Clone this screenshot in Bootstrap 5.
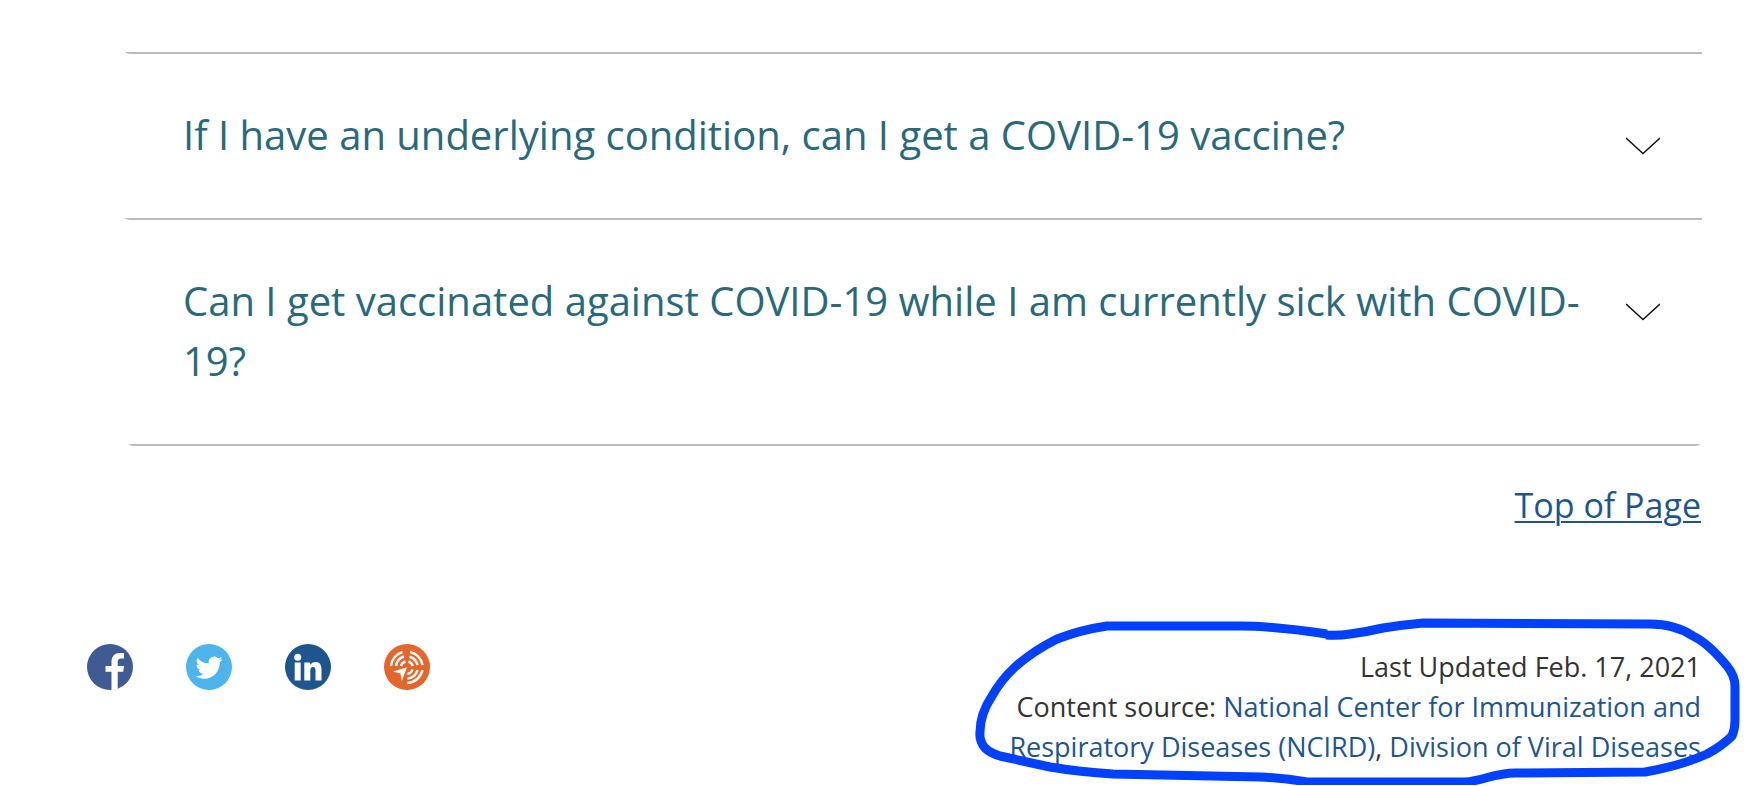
<!DOCTYPE html>
<html lang="en">
<head>
<meta charset="utf-8">
<meta name="viewport" content="width=device-width, initial-scale=1">
<title>COVID-19 vaccine questions</title>
<link href="https://cdn.jsdelivr.net/npm/bootstrap@5.3.0/dist/css/bootstrap.min.css" rel="stylesheet">
<style>
  body { font-family: "Open Sans", sans-serif; color: #333; background: #fff; }
  a { color: #1f558f; }
  .page-wrap { padding: 0 48px 0 87px; overflow: hidden; }
  .faq { margin-left: 38px; padding-top: 44px; }
  .faq .accordion-item, .faq-lead {
    border: 0 solid #bcbcbc; border-bottom-width: 2px;
    border-radius: 0 0 0 8px / 0 0 0 2px; background: transparent;
  }
  .faq-lead { height: 10px; }
  .faq .accordion-item:last-child {
    border-bottom: 2px solid #bcbcbc; margin: 0 2px 0 4px;
    border-radius: 0 0 6px 6px / 0 0 2px 2px;
  }
  .faq .accordion-button {
    padding: 51px 42px 53px 58px; gap: 32px; align-items: flex-start;
    font-size: 40px; line-height: 60px; color: #29697b;
    background: transparent; box-shadow: none;
  }
  .faq .accordion-item:last-child .accordion-button { padding-left: 54px; padding-right: 40px; }
  .faq .accordion-button::after { display: none; }
  .chevron { width: 34px; height: 18px; margin-top: 32px; }
  .top-link { font-size: 34px; line-height: 48px; margin-top: 35px; padding-right: 1px; }
  .top-link a { text-decoration-thickness: 2px; text-underline-offset: 3px; }
  .page-foot { margin-top: 115px; padding-bottom: 18px; }
  .social { gap: 53px; }
  .social svg { width: 46px; height: 46px; display: block; }
  .source { width: 720px; padding: 3px 1px 0 0; font-size: 27px; line-height: 40px; }
  .source a { text-decoration: none; }
  .ink { top: -35px; right: -48px; width: 780px; height: 176px; overflow: visible; pointer-events: none; }
</style>
</head>
<body>
<div class="page-wrap">
  <main>
    <div class="accordion accordion-flush faq">
      <div class="faq-lead"></div>
      <div class="accordion-item">
        <h2 class="accordion-header">
          <button class="accordion-button collapsed" type="button" aria-expanded="false">
            <span class="flex-grow-1">If I have an underlying condition, can I get a COVID-19 vaccine?</span>
            <svg class="chevron flex-shrink-0" viewBox="0 0 34 18" fill="none" stroke="#111" stroke-width="1.5" aria-hidden="true"><path d="M0 1 17 16.500 34 1"/></svg>
          </button>
        </h2>
      </div>
      <div class="accordion-item">
        <h2 class="accordion-header">
          <button class="accordion-button collapsed" type="button" aria-expanded="false">
            <span class="flex-grow-1">Can I get vaccinated against COVID-19 while I am currently sick with COVID-<wbr>19?</span>
            <svg class="chevron flex-shrink-0" viewBox="0 0 34 18" fill="none" stroke="#111" stroke-width="1.5" aria-hidden="true"><path d="M0 1 17 16.500 34 1"/></svg>
          </button>
        </h2>
      </div>
    </div>
    <div class="top-link text-end"><a href="#">Top of Page</a></div>
  </main>

  <footer class="page-foot d-flex justify-content-between align-items-start">
    <nav class="social d-flex" aria-label="Share">
      <a href="#" aria-label="Facebook">
        <svg viewBox="0 0 46 46"><circle cx="23" cy="23" r="23" fill="#405a93"/><path fill="#fff" d="M24.500 46V27.700H18.500V22H24.500V18C24.500 12 28 9 32.500 9H37V14.500H34C31.500 14.500 30.700 15.800 30.700 18V22H37L36.200 27.700H30.700V44.700Q27.500 46 24.500 46Z"/></svg>
      </a>
      <a href="#" aria-label="Twitter">
        <svg viewBox="0 0 46 46"><circle cx="23" cy="23" r="23" fill="#4eb4ec"/><path fill="#fff" transform="translate(9.500 9.300) scale(1.69)" d="M5.026 15c6.038 0 9.341-5.003 9.341-9.334q.002-.211-.006-.422A6.700 6.700 0 0 0 16 3.542a6.700 6.700 0 0 1-1.889.518 3.300 3.300 0 0 0 1.447-1.817 6.500 6.500 0 0 1-2.087.793A3.286 3.286 0 0 0 7.875 6.030a9.320 9.320 0 0 1-6.767-3.429 3.290 3.290 0 0 0 1.018 4.382A3.300 3.300 0 0 1 .640 6.575v.045a3.290 3.290 0 0 0 2.632 3.218 3.200 3.200 0 0 1-.865.115 3 3 0 0 1-.614-.057 3.280 3.280 0 0 0 3.067 2.277A6.600 6.600 0 0 1 .780 13.580a6 6 0 0 1-.780-.045A9.340 9.340 0 0 0 5.026 15"/></svg>
      </a>
      <a href="#" aria-label="LinkedIn">
        <svg viewBox="0 0 46 46"><circle cx="23" cy="23" r="23" fill="#1f558f"/><g fill="#fff"><circle cx="12.700" cy="13.300" r="3.500"/><path d="M9.700 18.500H15.700V36.500H9.700ZM19.300 18.500H25V21C26.200 19 28.300 18 30.700 18C35 18 36.500 21 36.500 26V36.500H30.500V27C30.500 24.500 30 23 28 23C26 23 25.300 24.500 25.300 27V36.500H19.300Z"/></g></svg>
      </a>
      <a href="#" aria-label="Syndicate">
        <svg viewBox="0 0 46 46"><circle cx="23" cy="23" r="23" fill="#e4662c"/><g fill="none" stroke="#fff" stroke-width="2.500"><path d="M7 22A16.500 16.500 0 0 1 18.500 8M12 22A11.500 11.500 0 0 1 20 12.500M17 22A6.500 6.500 0 0 1 21.500 17.500M26 8A16.500 16.500 0 0 1 38.500 21M25.500 12.800A11.500 11.500 0 0 1 33.500 21M24.500 17.500A6.500 6.500 0 0 1 28.700 22M38.500 26A16.500 16.500 0 0 1 23.500 39M33.500 26A11.500 11.500 0 0 1 23.500 34.500M28.500 25.500A6.500 6.500 0 0 1 23.500 30"/></g><path fill="#fff" d="M23 23.200 17.700 37.200 16.500 29.500 9 27.500Z"/></svg>
      </a>
    </nav>
    <div class="source text-end position-relative">
      <div>Last Updated Feb. 17, 2021</div>
      <div>Content source: <a href="#">National Center for Immunization and Respiratory Diseases (NCIRD)</a>, <a href="#">Division of Viral Diseases</a></div>
      <svg class="ink position-absolute" viewBox="970 610 780 176" fill="none" stroke="#0040ff" stroke-width="9" stroke-linejoin="round" aria-hidden="true">
        <path d="M1327 635C1300 631 1270 627 1240 627H1107Q1080 631 1057 640Q1033 652 1015 668Q1001 681 992 697Q980 715 980 733Q979 742 985 749Q990 754 1000 757L1050 768Q1080 773 1113 775L1260 778Q1285 779 1307 783H1465C1482 782 1495 774 1515 774L1645 773Q1680 767 1707 755Q1722 747 1732 737Q1735 730 1735 722V687Q1735 677 1727 667Q1708 644 1693 637Q1675 625 1650 625L1423 624Q1402 626 1383 629Q1366 633 1350 635Q1338 637 1326 636"/>
      </svg>
    </div>
  </footer>
</div>
<script src="https://cdn.jsdelivr.net/npm/bootstrap@5.3.0/dist/js/bootstrap.bundle.min.js"></script>
</body>
</html>
